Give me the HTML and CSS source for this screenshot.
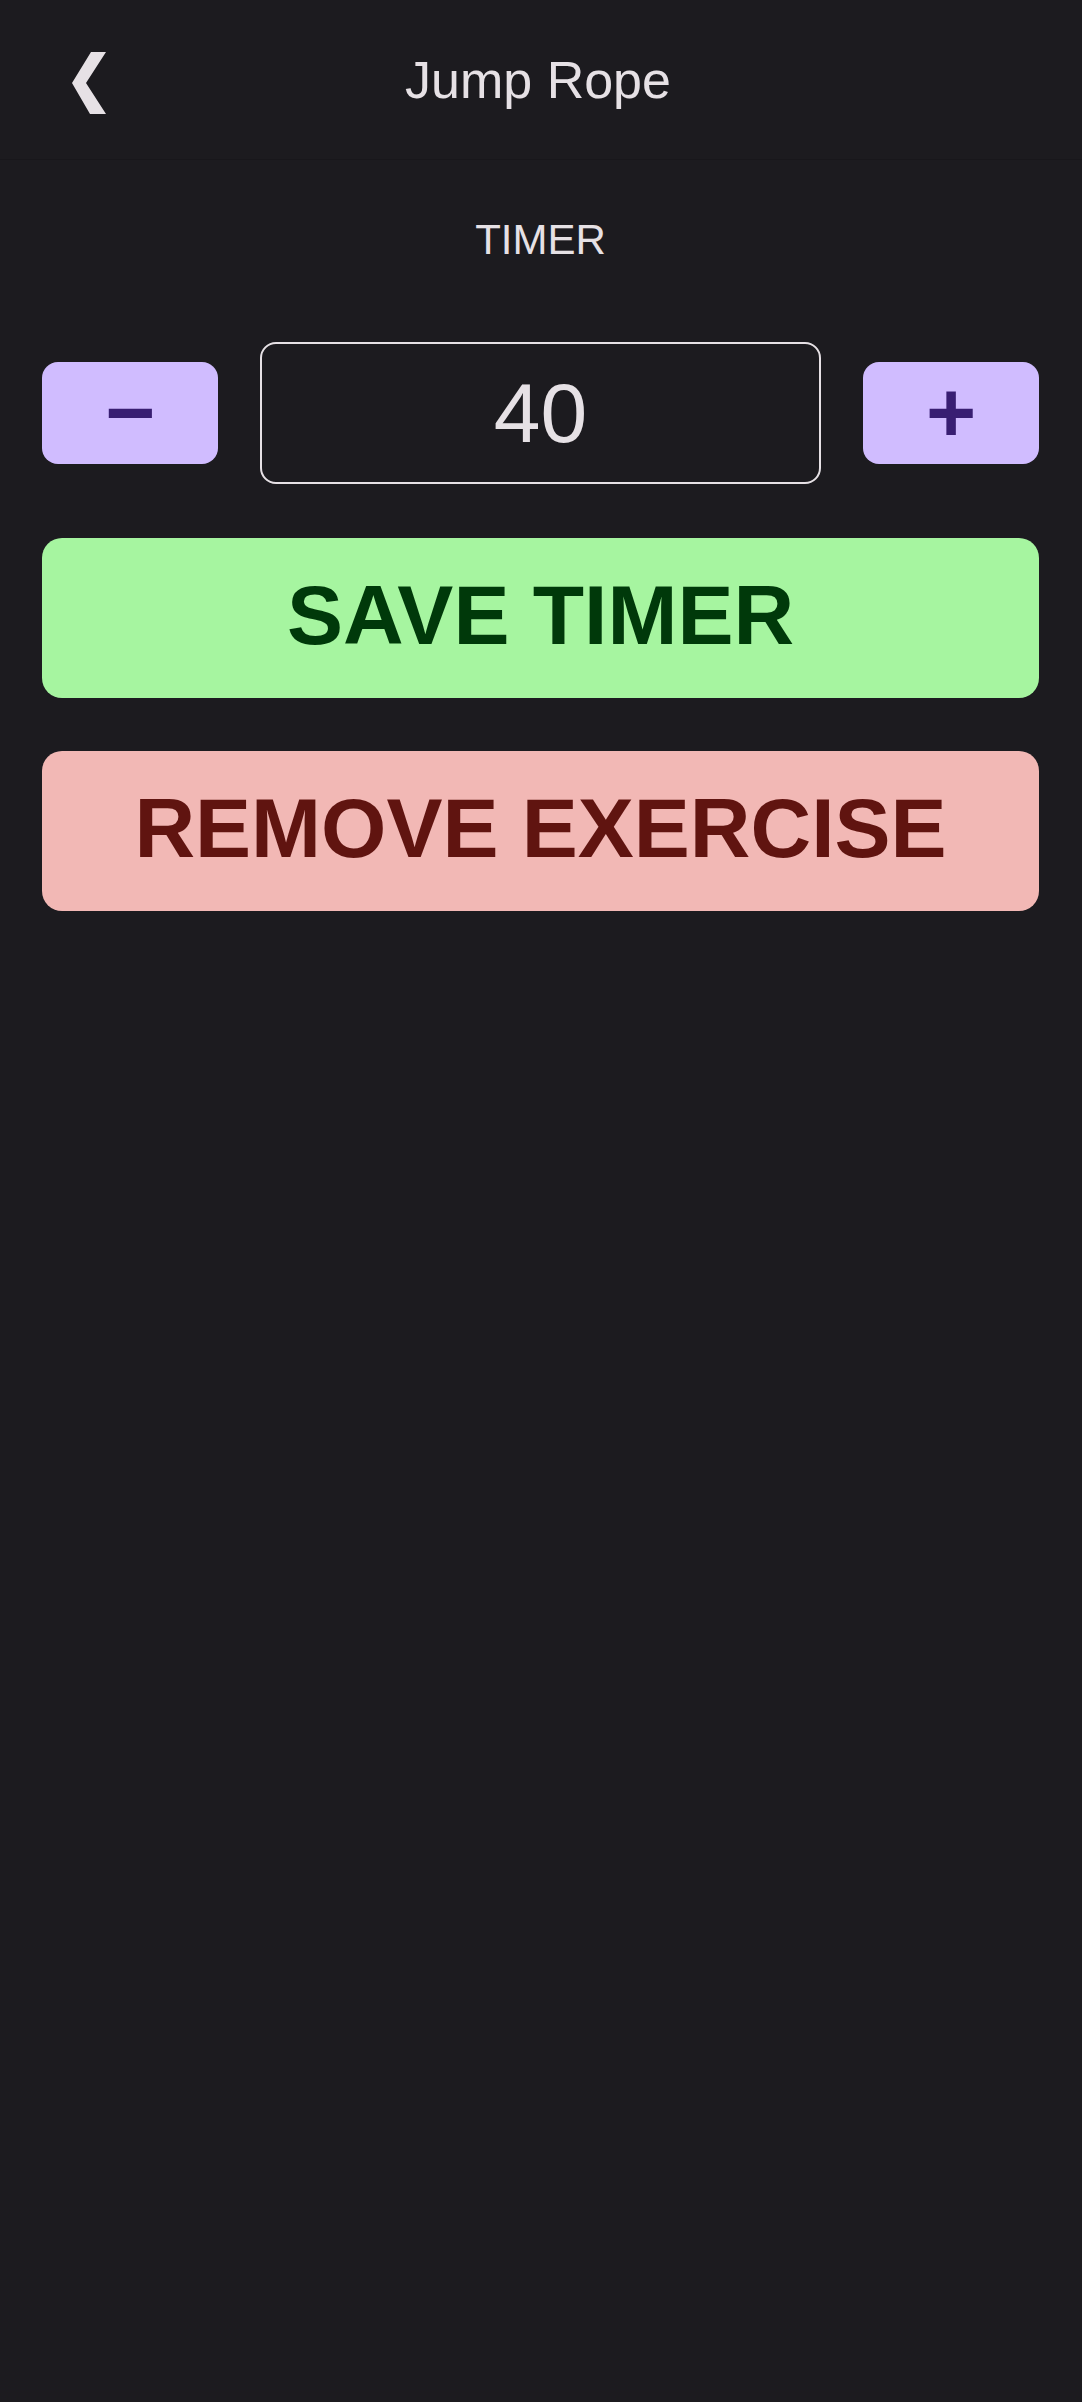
FILE: index.html
```html
<!DOCTYPE html>
<html lang="en">
<head>
<meta charset="utf-8">
<title>Jump Rope</title>
<link rel="stylesheet" href="styles.css">
</head>
<body>
<header class="topbar">
  <button class="back" aria-label="Back">
    <svg width="34" height="62" viewBox="0 0 34 62" aria-hidden="true"><polygon points="19,0 34,0 14,31 34,62 18,62 0,31" fill="#e6e1e5"/></svg>
  </button>
  <h1 class="title">Jump Rope</h1>
  <span class="spacer"></span>
</header>
<main class="content">
  <p class="label">TIMER</p>
  <div class="stepper">
    <button class="step">&minus;</button>
    <div class="value">40</div>
    <button class="step">+</button>
  </div>
  <button class="action save">SAVE TIMER</button>
  <button class="action remove">REMOVE EXERCISE</button>
</main>
</body>
</html>
```
FILE: styles.css
```css
html {
  background: #1c1b1f;
}
body {
  margin: 0;
  min-height: 2402px;
  background: #1c1b1f;
  color: #e6e1e5;
  font-family: "Liberation Sans", Arial, sans-serif;
}
.topbar {
  display: grid;
  grid-template-columns: 1fr auto 1fr;
  align-items: center;
  height: 159px;
  border-bottom: 1px solid #18171b;
}
.back {
  justify-self: start;
  margin: 7px 0 0 72px;
  padding: 0;
  border: 0;
  background: none;
  line-height: 0;
  display: block;
}
.title {
  margin: 0 6px 0 0;
  font-size: 52px;
  font-weight: 400;
  color: #e6e1e5;
}
.content {
  display: flex;
  flex-direction: column;
  padding: 0 43px 0 42px;
}
.label {
  margin: 56px 0 0;
  text-align: center;
  font-size: 42px;
  color: #e6e1e5;
}
.stepper {
  margin-top: 78px;
  display: flex;
  align-items: center;
  gap: 42px;
}
.step {
  flex: 0 0 176px;
  height: 102px;
  padding: 0 0 2px;
  border: 0;
  border-radius: 16px;
  background: #d0bcff;
  color: #381e72;
  font-family: "Liberation Sans", Arial, sans-serif;
  font-weight: 700;
  font-size: 86px;
  line-height: 1;
  display: flex;
  align-items: center;
  justify-content: center;
}
.value {
  flex: 1;
  height: 142px;
  box-sizing: border-box;
  border: 2px solid #e6e1e5;
  border-radius: 16px;
  display: flex;
  align-items: center;
  justify-content: center;
  font-size: 84px;
  color: #e6e1e5;
}
.action {
  width: 100%;
  height: 160px;
  margin-top: 54px;
  padding: 0 0 5px;
  border: 0;
  border-radius: 20px;
  font-family: "Liberation Sans", Arial, sans-serif;
  font-weight: 700;
  font-size: 84px;
}
.save {
  background: #a6f5a0;
  color: #00390a;
}
.remove {
  margin-top: 53px;
  background: #f2b8b5;
  color: #601410;
}
```
